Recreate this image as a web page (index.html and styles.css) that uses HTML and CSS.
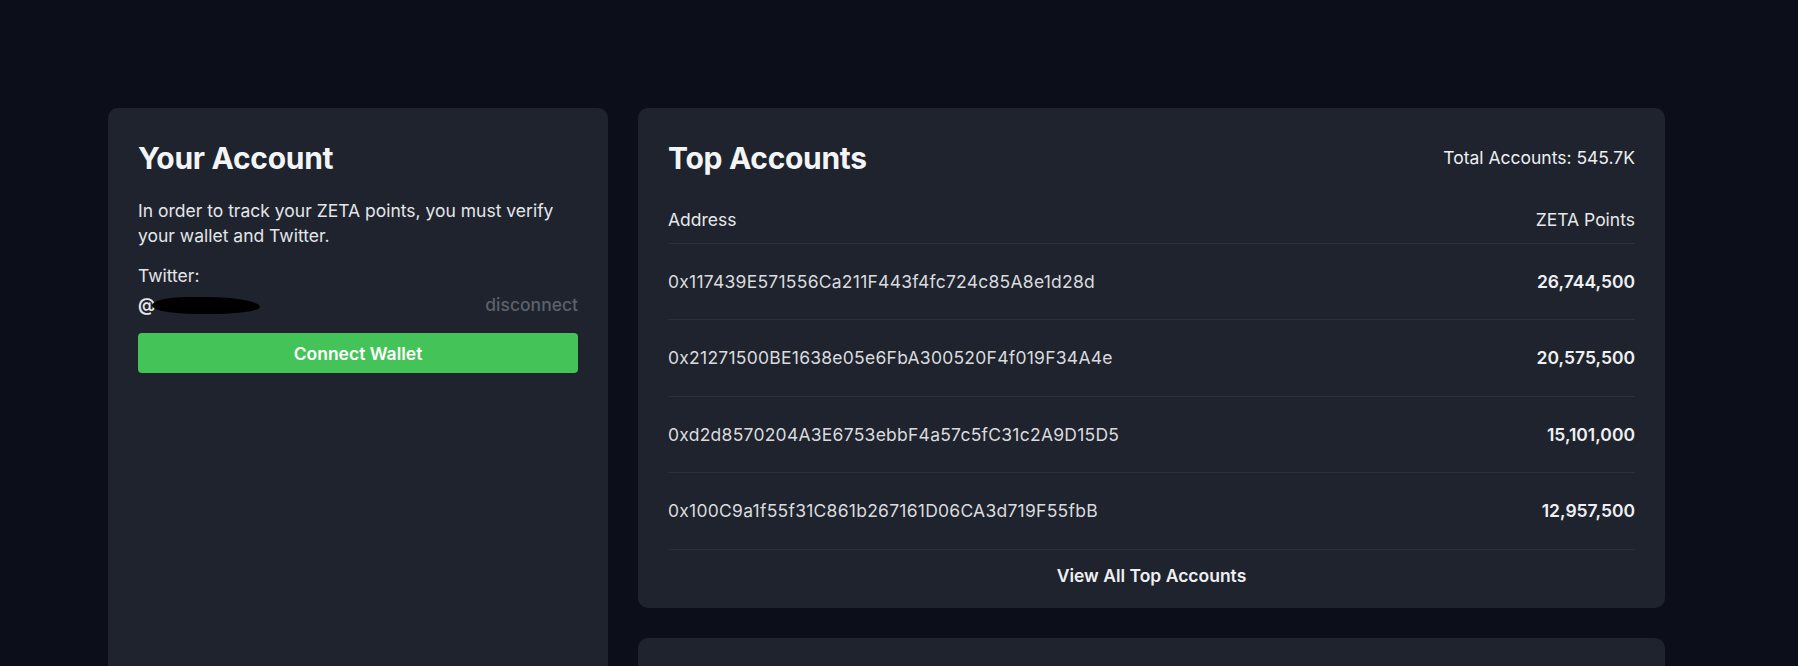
FILE: index.html
```html
<!DOCTYPE html>
<html lang="en">
<head>
<meta charset="utf-8">
<title>ZETA Points</title>
<link rel="stylesheet" href="styles.css">
</head>
<body>
<main class="page">
  <section class="card account">
    <h2 class="title">Your Account</h2>
    <p class="intro">In order to track your ZETA points, you must verify your wallet and Twitter.</p>
    <div class="label">Twitter:</div>
    <div class="handle-row">
      <span class="handle">@<span class="redact"></span></span>
      <a class="disconnect">disconnect</a>
    </div>
    <button class="connect">Connect Wallet</button>
  </section>

  <div class="right-col">
    <section class="card top">
      <div class="top-head">
        <h2 class="title">Top Accounts</h2>
        <span class="total">Total Accounts: 545.7K</span>
      </div>
      <div class="row head-row">
        <span>Address</span>
        <span>ZETA Points</span>
      </div>
      <div class="row">
        <span class="addr">0x117439E571556Ca211F443f4fc724c85A8e1d28d</span>
        <span class="pts">26,744,500</span>
      </div>
      <div class="row">
        <span class="addr">0x21271500BE1638e05e6FbA300520F4f019F34A4e</span>
        <span class="pts">20,575,500</span>
      </div>
      <div class="row">
        <span class="addr">0xd2d8570204A3E6753ebbF4a57c5fC31c2A9D15D5</span>
        <span class="pts">15,101,000</span>
      </div>
      <div class="row">
        <span class="addr">0x100C9a1f55f31C861b267161D06CA3d719F55fbB</span>
        <span class="pts">12,957,500</span>
      </div>
      <div class="view-all">View All Top Accounts</div>
    </section>
    <section class="card next"></section>
  </div>
</main>
</body>
</html>
```

FILE: styles.css
```css
* { box-sizing: border-box; }

html, body {
  margin: 0;
  height: 100%;
  overflow: hidden;
}

body {
  background: #0c0f19;
  color: #eceef1;
  font-family: Inter, "Noto Sans", sans-serif;
  font-size: 17.5px;
}

.page {
  display: grid;
  grid-template-columns: 500px 1027px;
  column-gap: 30px;
  align-items: start;
  padding: 108px 0 0 108px;
}

.card {
  background: #1f232d;
  border-radius: 10px;
}

.title {
  margin: 0 0 20px;
  font-size: 30px;
  line-height: 40px;
  font-weight: 700;
  letter-spacing: -0.3px;
  color: #f3f4f6;
}

/* Left card */
.account {
  padding: 30px;
  min-height: 640px;
}

.intro {
  margin: 0;
  line-height: 25px;
  color: #e4e6ea;
}

.label {
  margin-top: 16px;
  line-height: 24px;
  color: #e4e6ea;
}

.handle-row {
  margin-top: 5px;
  display: flex;
  justify-content: space-between;
  align-items: center;
  line-height: 24px;
}

.handle {
  display: flex;
  align-items: center;
  font-weight: 600;
  color: #e4e6ea;
}

.redact {
  display: inline-block;
  width: 108px;
  height: 17px;
  margin-left: -3px;
  background: #000;
  border-radius: 35% 55% 50% 45% / 55% 65% 45% 55%;
}

.disconnect {
  color: #5c616b;
  font-weight: 500;
}

.connect {
  margin-top: 16px;
  width: 100%;
  height: 40px;
  border: 0;
  border-radius: 4px;
  background: #44c458;
  color: #fff;
  font-family: inherit;
  font-size: 17.5px;
  font-weight: 600;
}

/* Right column */
.right-col {
  display: flex;
  flex-direction: column;
  gap: 30px;
}

.top {
  padding: 30px 30px 0;
}

.top-head {
  display: flex;
  justify-content: space-between;
  align-items: flex-start;
}

.total {
  line-height: 40px;
  color: #eceef1;
}

.row {
  display: flex;
  justify-content: space-between;
  align-items: center;
  line-height: 24px;
  padding: 26px 0 25.4px;
  border-bottom: 1px solid #2a2f39;
}

.head-row {
  padding: 10px 0 11px;
  color: #e6e8eb;
}

.addr {
  color: #d9dbdf;
  letter-spacing: 0.25px;
}

.pts {
  font-weight: 600;
  color: #eef0f2;
}

.view-all {
  text-align: center;
  font-weight: 600;
  line-height: 24px;
  padding: 14px 0 20px;
  color: #eef0f2;
}

.next {
  height: 120px;
}
```
